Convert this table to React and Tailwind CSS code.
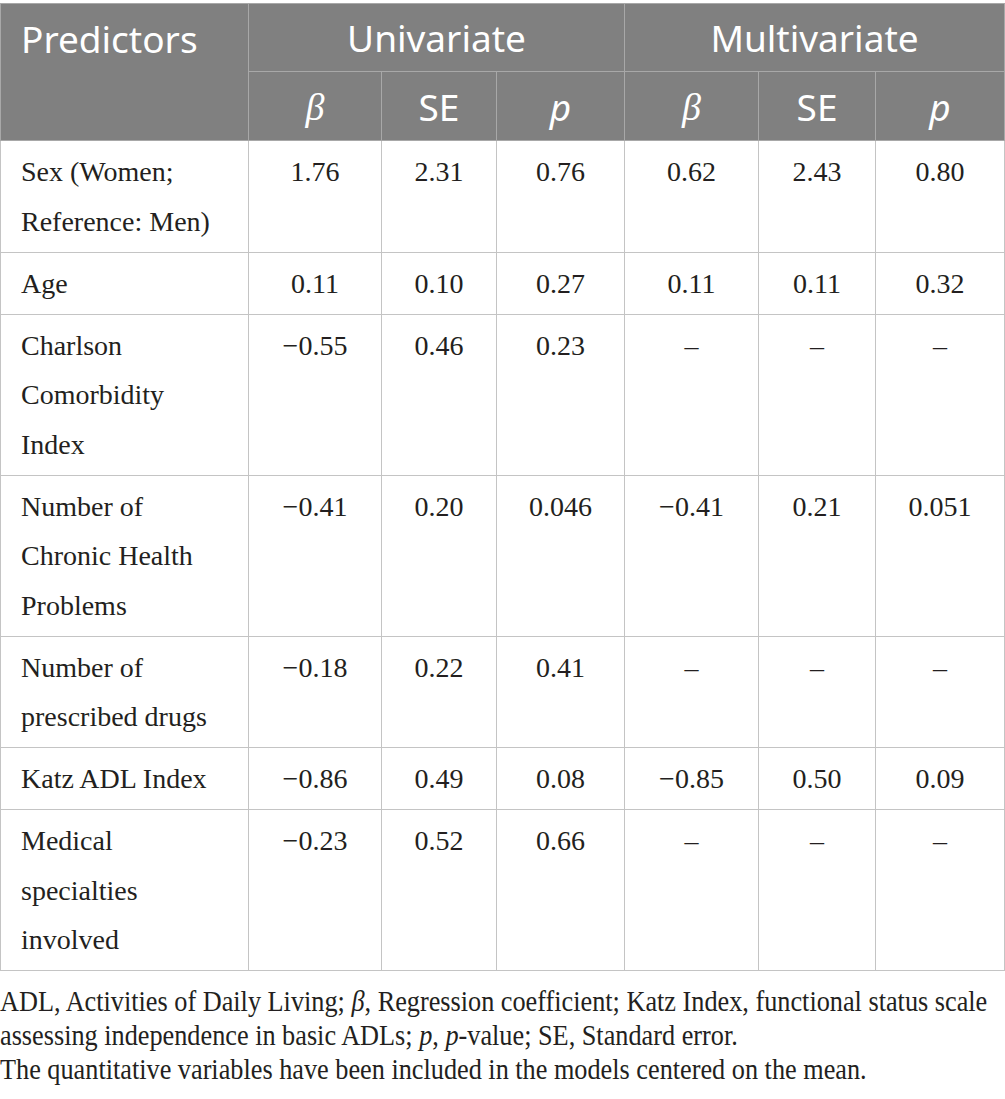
import React from "react";

const serif = "font-['Liberation_Serif','Times_New_Roman',serif]";
const sans = "font-['Noto_Sans','Open_Sans',sans-serif]";

const rows = [
  { label: ["Sex (Women;", "Reference: Men)"], uni: ["1.76", "2.31", "0.76"], multi: ["0.62", "2.43", "0.80"] },
  { label: ["Age"], uni: ["0.11", "0.10", "0.27"], multi: ["0.11", "0.11", "0.32"] },
  { label: ["Charlson", "Comorbidity", "Index"], uni: ["\u22120.55", "0.46", "0.23"], multi: ["\u2013", "\u2013", "\u2013"] },
  { label: ["Number of", "Chronic Health", "Problems"], uni: ["\u22120.41", "0.20", "0.046"], multi: ["\u22120.41", "0.21", "0.051"] },
  { label: ["Number of", "prescribed drugs"], uni: ["\u22120.18", "0.22", "0.41"], multi: ["\u2013", "\u2013", "\u2013"] },
  { label: ["Katz ADL Index"], uni: ["\u22120.86", "0.49", "0.08"], multi: ["\u22120.85", "0.50", "0.09"] },
  { label: ["Medical", "specialties", "involved"], uni: ["\u22120.23", "0.52", "0.66"], multi: ["\u2013", "\u2013", "\u2013"] },
];

function SubHeads() {
  return (
    <>
      <th className="border border-[#a8a8a8] font-normal align-middle text-center">
        <span className={`${serif} italic text-[38px]`}>β</span>
      </th>
      <th className="border border-[#a8a8a8] font-normal align-middle text-center">SE</th>
      <th className="border border-[#a8a8a8] font-normal align-middle text-center italic">p</th>
    </>
  );
}

function App() {
  return (
    <div className="bg-white w-[1005px] min-h-[1099px] pt-[3px]">
      <table className="w-[1004px] table-fixed border-collapse">
        <colgroup>
          <col className="w-[248px]" />
          <col className="w-[133px]" />
          <col className="w-[115px]" />
          <col className="w-[128px]" />
          <col className="w-[134px]" />
          <col className="w-[117px]" />
          <col className="w-[129px]" />
        </colgroup>
        <thead className={`bg-[#808080] text-white ${sans} text-[37px] leading-none`}>
          <tr className="h-[68px]">
            <th rowSpan={2} className="border border-[#a8a8a8] font-normal text-left align-top pl-5">
              <div className="h-[68px] flex items-center">Predictors</div>
            </th>
            <th colSpan={3} className="border border-[#a8a8a8] font-normal text-center align-middle">
              Univariate
            </th>
            <th colSpan={3} className="border border-[#a8a8a8] font-normal text-center align-middle">
              Multivariate
            </th>
          </tr>
          <tr className="h-[69px]">
            <SubHeads />
            <SubHeads />
          </tr>
        </thead>
        <tbody className={`${serif} text-[28px] leading-[49.5px] text-[#231f20]`}>
          {rows.map((r, i) => (
            <tr key={i}>
              <td className="border border-[#c4c4c4] align-top pl-5 pt-[6px] pb-[5.5px]">
                {r.label.map((l, j) => (
                  <div key={j} className="whitespace-nowrap">{l}</div>
                ))}
              </td>
              {[...r.uni, ...r.multi].map((v, j) => (
                <td key={j} className="border border-[#c4c4c4] align-top text-center pt-[6px] pb-[5.5px]">
                  {v}
                </td>
              ))}
            </tr>
          ))}
        </tbody>
      </table>

      {/* footnote */}
      <div className={`${serif} mt-[13px] text-[30px] leading-[34px] text-[#231f20] whitespace-nowrap origin-top-left scale-x-[0.875]`}>
        <div>
          ADL, Activities of Daily Living; <i>β</i>, Regression coefficient; Katz Index, functional status scale
        </div>
        <div>
          assessing independence in basic ADLs; <i>p</i>, <i>p</i>-value; SE, Standard error.
        </div>
        <div>The quantitative variables have been included in the models centered on the mean.</div>
      </div>
    </div>
  );
}

export default App;
